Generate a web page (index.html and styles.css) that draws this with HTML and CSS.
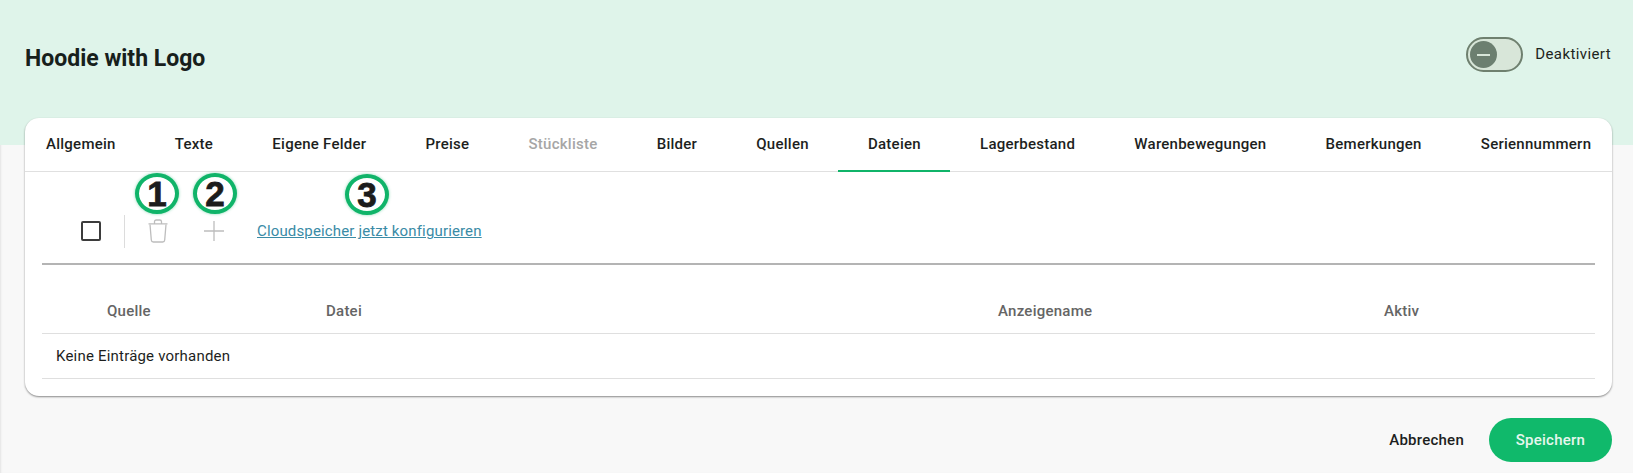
FILE: index.html
```html
<!DOCTYPE html>
<html lang="de">
<head>
<meta charset="utf-8">
<title>Hoodie with Logo</title>
<link rel="stylesheet" href="styles.css">
</head>
<body>
<div class="page">
  <header class="hero">
    <h1 class="title">Hoodie with Logo</h1>
    <div class="status">
      <span class="switch"><span class="knob"><span class="dash"></span></span></span>
      <span class="status-label">Deaktiviert</span>
    </div>
  </header>
  <main class="card">
    <nav class="tabs">
      <span class="tab first">Allgemein</span>
      <span class="tab">Texte</span>
      <span class="tab">Eigene Felder</span>
      <span class="tab">Preise</span>
      <span class="tab disabled">Stückliste</span>
      <span class="tab">Bilder</span>
      <span class="tab">Quellen</span>
      <span class="tab active">Dateien</span>
      <span class="tab">Lagerbestand</span>
      <span class="tab">Warenbewegungen</span>
      <span class="tab">Bemerkungen</span>
      <span class="tab">Seriennummern</span>
    </nav>
    <section class="content">
      <div class="toolbar">
        <span class="checkbox"></span>
        <span class="divider"></span>
        <svg class="icon trash" width="22" height="26" viewBox="0 0 22 26" fill="none" stroke="#bdbdbd" stroke-width="1.3">
          <path d="M3 6.5l1.3 15.5c.1 1.2.9 2 2 2h9.400c1.100 0 1.900-.8 2-2L19 6.500"/>
          <path d="M1.500 5.800h19M7.500 5.500V3.700c0-1 .7-1.700 1.700-1.700h3.600c1 0 1.700.7 1.700 1.700v1.800"/>
        </svg>
        <svg class="icon plus" width="20" height="20" viewBox="0 0 20 20" fill="none" stroke="#bdbdbd" stroke-width="1.300">
          <path d="M10 0v20M0 10h20"/>
        </svg>
        <a class="link" href="#">Cloudspeicher jetzt konfigurieren</a>
      </div>
      <div class="row head">
        <span class="col-source">Quelle</span>
        <span class="col-file">Datei</span>
        <span class="col-name">Anzeigename</span>
        <span class="col-active">Aktiv</span>
      </div>
      <div class="row empty">Keine Einträge vorhanden</div>
    </section>
    <span class="marker m1">1</span>
    <span class="marker m2">2</span>
    <span class="marker m3">3</span>
  </main>
  <footer class="actions">
    <button class="btn cancel" type="button">Abbrechen</button>
    <button class="btn save" type="button">Speichern</button>
  </footer>
</div>
</body>
</html>
```
FILE: styles.css
```css
* { box-sizing: border-box; }
html, body { margin: 0; padding: 0; }
body {
  background: #f8f8f8;
  font-family: Roboto, "Liberation Sans", sans-serif;
  color: #1d1f1e;
  font-size: 15px;
}
.page {
  height: 473px;
  overflow: hidden;
  box-shadow: inset 2px 0 2px -1px #e4e4e4;
}
.hero {
  height: 145px;
  background: #dff4ea;
  padding: 37px 22px 0 25px;
  display: flex;
  align-items: flex-start;
  justify-content: space-between;
}
.title {
  margin: 8px 0 0;
  font-size: 23px;
  line-height: 28px;
  font-weight: 700;
  color: #17201c;
}
.status { display: flex; align-items: center; gap: 12px; }
.switch {
  width: 57px;
  height: 35px;
  border: 2px solid #6f806f;
  border-radius: 18px;
  background: #d8e6d9;
  padding: 2px;
  display: flex;
  align-items: center;
}
.knob {
  width: 27px;
  height: 27px;
  border-radius: 50%;
  background: #6c7f70;
  display: flex;
  align-items: center;
  justify-content: center;
}
.dash { width: 13px; height: 2px; background: #d8e6d9; }
.status-label { font-size: 15px; letter-spacing: 0.4px; color: #1d2420; margin-top: -1px; }
.card {
  position: relative;
  margin: -27px 21px 0 25px;
  height: 278px;
  background: #fff;
  border-radius: 14px;
  box-shadow: 0 1px 2px rgba(0, 0, 0, 0.45);
}
.tabs {
  display: flex;
  height: 54px;
  border-bottom: 1px solid #e0e0e0;
}
.tab {
  padding: 0 29.6px;
  height: 53px;
  line-height: 53px;
  font-weight: 500;
  font-size: 15px;
  letter-spacing: 0.25px;
  color: #1d1f1e;
  white-space: nowrap;
}
.tab.first { padding-left: 21px; }
.tab.disabled { color: #a6a6a6; }
.tab.active { height: 54px; border-bottom: 2px solid #10b469; }
.content { padding: 0 17px; }
.toolbar {
  height: 93px;
  border-bottom: 2px solid #b4b4b4;
  display: flex;
  align-items: center;
  padding: 27px 0 0 39px;
}
.checkbox {
  width: 20px;
  height: 20px;
  border: 2px solid #3c3c3c;
  border-radius: 2px;
}
.divider { width: 1px; height: 33px; background: #dcdcdc; margin-left: 23px; }
.icon { display: block; flex: none; }
.trash { margin-left: 22px; }
.plus { margin-left: 35px; }
.link {
  margin-left: 33px;
  color: #3a8ba6;
  font-size: 15px;
  letter-spacing: 0.15px;
}
.row {
  display: flex;
  align-items: center;
  border-bottom: 1px solid #dfdfdf;
}
.head {
  height: 69px;
  padding-top: 23px;
  font-weight: 500;
  color: #656565;
  letter-spacing: 0.25px;
}
.head span { display: block; }
.col-source { width: 284px; padding-left: 65px; }
.col-file { width: 672px; }
.col-name { width: 386px; }
.empty { height: 45px; padding-left: 14px; letter-spacing: 0.2px; }
.marker {
  position: absolute;
  top: 55px;
  width: 44px;
  height: 41px;
  border-radius: 50%;
  border: 4px solid #10b469;
  background: #fff;
  box-shadow: 0 0 3px rgba(16, 180, 105, 0.5);
  font-family: "Liberation Sans", sans-serif;
  font-weight: 700;
  font-size: 35px;
  line-height: 33px;
  text-align: center;
  color: #1c1c1c;
  -webkit-text-stroke: 0.8px #1c1c1c;
}
.m1 { left: 110px; }
.m2 { left: 168px; }
.m3 { left: 320px; top: 56px; }
.actions {
  display: flex;
  justify-content: flex-end;
  align-items: center;
  margin: 22px 21px 0 0;
}
.btn {
  font-family: inherit;
  font-size: 15px;
  font-weight: 500;
  letter-spacing: 0.25px;
  border: 0;
  background: none;
  padding: 0;
}
.cancel { color: #1d1f1e; margin-right: 25px; }
.save {
  width: 123px;
  height: 44px;
  border-radius: 22px;
  background: #10b96b;
  color: #e6f7ee;
}
```
